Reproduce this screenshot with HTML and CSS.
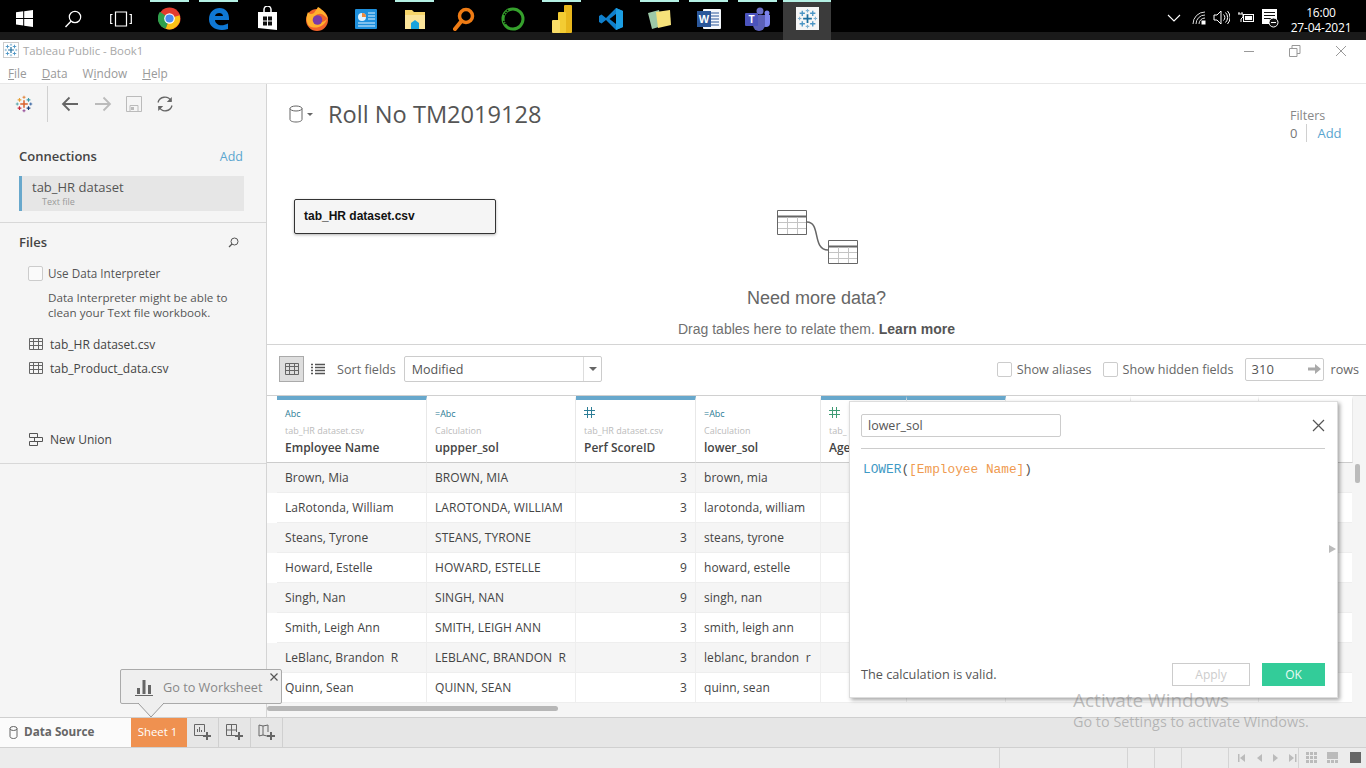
FILE: index.html
```html
<!DOCTYPE html>
<html lang="en">
<head>
<meta charset="utf-8">
<title>Tableau Public - Book1</title>
<link rel="stylesheet" href="styles.css">
</head>
<body>
<svg class="defs" width="0" height="0">
  <symbol id="tb-grid" viewBox="0 0 14 12"><path d="M.5.5h13v11H.5zM.5 3.5h13M.5 7.5h13M4.5.5v11M9.5.5v11" fill="none" stroke="currentColor"/></symbol>
  <symbol id="hash" viewBox="0 0 11 11"><path d="M3.500 0v11M7.500 0v11M0 3.500h11M0 7.500h11" fill="none" stroke="currentColor"/></symbol>
  <symbol id="logo" viewBox="0 0 24 24"><g fill="none" stroke-width="1.5"><path d="M12 7v10M7 12h10" stroke="#1f6f9f" stroke-width="2"/><path d="M6 3v6M3 6h6M18 3v6M15 6h6M6 15v6M3 18h6M18 15v6M15 18h6" stroke="#4a94c4"/><path d="M12 1v4M10 3h4M12 19v4M10 21h4M1 12h4M3 10v4M19 12h4M21 10v4" stroke="#7fb2d3" stroke-width="1.2"/></g></symbol>
</svg>

<header class="taskbar">
  <div class="tb-left">
    <span class="tb-item"><svg width="17" height="17" viewBox="0 0 17 17"><path d="M0 2.3 7.2 1.3v6.6H0zM8.2 1.2 17 0v7.9H8.2zM0 8.9h7.2v6.7L0 14.6zM8.2 8.9H17V17l-8.8-1.2z" fill="#fff"/></svg></span>
    <span class="tb-item"><svg width="18" height="18" viewBox="0 0 18 18"><circle cx="11" cy="7" r="5.7" fill="none" stroke="#fff" stroke-width="1.2"/><path d="M7 11.2 1.5 17" stroke="#fff" stroke-width="1.4"/></svg></span>
    <span class="tb-item"><svg width="22" height="16" viewBox="0 0 22 16"><path d="M5.5 1h11v14h-11zM2.5 3.5H.7v9h1.8M19.500 3.500h1.800v9h-1.800" fill="none" stroke="#fff" stroke-width="1.200"/></svg></span>
    <span class="tb-item tb-on"><svg width="23" height="23" viewBox="0 0 24 24"><circle cx="12" cy="12" r="11.500" fill="#e33b2e"/><path d="M12 12 22.500 8.500A11.500 11.500 0 0 1 8 22.800z" fill="#fbc116"/><path d="M12 12 8 22.800A11.500 11.500 0 0 1 2 5z" fill="#2fa04c"/><circle cx="12" cy="12" r="5.500" fill="#fff"/><circle cx="12" cy="12" r="4.300" fill="#4a8bf0"/></svg></span>
    <span class="tb-item tb-on"><svg width="22" height="24" viewBox="0 0 22 24"><path d="M21 13H7c.3 5 6.500 7 13 3.500v5.500C11 25 1 21 1 12.500 1 5 6 1 11.500 1 18 1 21.500 6 21 13zM7 9h8c0-4-7.500-4-8 0z" fill="#0f78d4"/></svg></span>
    <span class="tb-item"><svg width="21" height="25" viewBox="0 0 21 25"><path d="M1 6h19v18L1 22z" fill="#fff"/><path d="M7 6V3.500a3.500 3.500 0 0 1 7 0V6" fill="none" stroke="#fff" stroke-width="1.500"/><path d="M6 10.500h4v4H6zM11 10.500h4v4h-4zM6 15.500h4v4H6zM11 15.500h4v4h-4z" fill="#111"/></svg></span>
    <span class="tb-item"><svg width="24" height="24" viewBox="0 0 24 24"><circle cx="12" cy="13" r="11" fill="#f0632b"/><path d="M3 5c2 3 4 2 6 1 2-3 3-4 4-6 2 1 8 5 10 12-2-2-6-6-9-5-5 0-5 6 0 8 3 1 6-1 8-3-2 7-11 11-18 7C1 15 1 10 3 5z" fill="#ffb02e"/><circle cx="12.500" cy="13" r="4.800" fill="#7a3aa8"/></svg></span>
    <span class="tb-item"><svg width="22" height="20" viewBox="0 0 22 20"><rect width="22" height="20" rx="1" fill="#1e8fdc"/><circle cx="7" cy="8" r="4" fill="#dff2ff"/><path d="M7 8V4a4 4 0 0 1 4 4z" fill="#f08a3c"/><path d="M13 4h7M13 7h7M13 10h7M3 14h17M3 17h17" stroke="#dff2ff"/></svg></span>
    <span class="tb-item tb-on"><svg width="22" height="22" viewBox="0 0 22 22"><path d="M1 2h7l2 2h11v16H1z" fill="#f6d56b"/><path d="M1 7h20v14H1z" fill="#fbe49a"/><path d="M7 21v-6l4-3 4 3v6z" fill="#18a3dd"/></svg></span>
    <span class="tb-item"><svg width="22" height="24" viewBox="0 0 22 24"><circle cx="13" cy="9" r="6.500" fill="none" stroke="#ee7b14" stroke-width="3.500"/><path d="M8.500 14 2 22" stroke="#ee7b14" stroke-width="4" stroke-linecap="round"/></svg></span>
    <span class="tb-item"><svg width="24" height="24" viewBox="0 0 24 24"><circle cx="12" cy="12" r="10" fill="none" stroke="#35a02c" stroke-width="3"/><path d="M3 8 7 3M2.500 14l2 3" stroke="#000" stroke-width="1.500" stroke-dasharray="1.500 1"/></svg></span>
    <span class="tb-item tb-on"><svg width="20" height="28" viewBox="0 0 20 28"><rect x="12" y="0" width="8" height="28" rx="1" fill="#e8b71c"/><rect x="6" y="7" width="8" height="21" rx="1" fill="#f3cc33"/><rect x="0" y="15" width="8" height="13" rx="1" fill="#f9dd67"/></svg></span>
    <span class="tb-item"><svg width="24" height="24" viewBox="0 0 24 24"><path d="M17 1 7 11 2.500 7.500 0 9v6l2.500 1.500L7 13l10 10 7-3V4z" fill="#0f7fcb"/><path d="M17 7 10.500 12 17 17z" fill="#000"/><path d="M17 1 24 4v16l-7 3z" fill="#1b9de2"/></svg></span>
    <span class="tb-item tb-on"><svg width="25" height="24" viewBox="0 0 25 24"><path d="M1 6 12 3l3 16-10 3z" fill="#9cc9a8"/><path d="M9 5 23 3l1 15-13 3z" fill="#f6e27a"/></svg></span>
    <span class="tb-item tb-on"><svg width="24" height="22" viewBox="0 0 24 22"><rect x="6" y="1" width="18" height="20" rx="1" fill="#f4f7fb"/><path d="M14 5h8M14 8h8M14 11h8M14 14h8M14 17h8" stroke="#2b579a"/><rect x="0" y="3" width="14" height="16" fill="#2b579a"/><text x="7" y="15" class="svg-w">W</text></svg></span>
    <span class="tb-item tb-on"><svg width="26" height="24" viewBox="0 0 26 24"><circle cx="15" cy="4" r="3.500" fill="#6a70c9"/><circle cx="22" cy="6" r="2.500" fill="#7b83eb"/><path d="M17 8h8v8a4 4 0 0 1-8 0z" fill="#7b83eb"/><path d="M8 8h12v10a6 6 0 0 1-12 0z" fill="#5b60b8"/><rect y="6" width="13" height="13" rx="1" fill="#4b53bc"/><text x="6.500" y="16" class="svg-t">T</text></svg></span>
    <span class="tb-item tb-active"><span class="tile"><svg width="21" height="21"><use href="#logo"/></svg></span></span>
  </div>
  <div class="tray">
    <svg width="14" height="8" viewBox="0 0 14 8"><path d="M1 1l6 6 6-6" fill="none" stroke="#fff" stroke-width="1.100"/></svg>
    <svg class="t-wifi" width="14" height="14" viewBox="0 0 14 14"><path d="M1 13A12 12 0 0 1 13 1M4 13a9 9 0 0 1 9-9M7 13a6 6 0 0 1 6-6" fill="none" stroke="#ddd"/><rect x="9.500" y="9.500" width="4" height="4" fill="#fff"/></svg>
    <svg class="t-vol" width="17" height="15" viewBox="0 0 17 15"><path d="M1 5h3l4-4v13l-4-4H1z" fill="none" stroke="#fff"/><path d="M10.500 4.500a4 4 0 0 1 0 6M12.500 2.500a7 7 0 0 1 0 10M14.500 1a9.500 9.500 0 0 1 0 13" fill="none" stroke="#fff"/></svg>
    <svg class="t-bat" width="16" height="12" viewBox="0 0 16 12"><path d="M1 0v2M4 0v2M0 2h5v3L3 7v3" fill="none" stroke="#fff"/><rect x="5.500" y="2.500" width="10" height="7" fill="#111" stroke="#fff"/><rect x="7" y="4" width="7" height="4" fill="#fff"/></svg>
    <svg class="t-note" width="17" height="20" viewBox="0 0 17 20"><path d="M0 1h15v12H9v3H0z" fill="#fff"/><path d="M2 4.500h11M2 7.500h11M2 10.500h7" stroke="#111"/><circle cx="11.500" cy="14.500" r="4.500" fill="#111" stroke="#fff"/><path d="M9 14.500h5" stroke="#fff"/></svg>
    <div class="clock"><span>16:00</span><span>27-04-2021</span></div>
  </div>
</header>

<div class="titlebar">
  <div class="tt-left">
    <svg class="app-icon" width="16" height="16"><use href="#logo"/></svg>
    <span>Tableau Public - Book1</span>
  </div>
  <div class="win-ctrls">
    <svg width="12" height="12" viewBox="0 0 12 12"><path d="M1 6.500h10" stroke="#999"/></svg>
    <svg width="12" height="12" viewBox="0 0 12 12"><path d="M.5 3.500h7.500v8H.5zM3 3.500V.5h8v8H8" fill="none" stroke="#999"/></svg>
    <svg width="12" height="12" viewBox="0 0 12 12"><path d="M1 1l10 10M11 1 1 11" stroke="#999"/></svg>
  </div>
</div>
<nav class="menubar"><span><u>F</u>ile</span><span><u>D</u>ata</span><span>W<u>i</u>ndow</span><span><u>H</u>elp</span></nav>

<div class="work">
  <aside class="side">
    <div class="side-tools">
      <svg width="18" height="18" viewBox="0 0 24 24"><g fill="none"><path d="M12 7v10M7 12h10" stroke="#d9622b" stroke-width="2"/><path d="M6 4v5M3.500 6.500h5" stroke="#e8a33a" stroke-width="1.500"/><path d="M18 4v5M15.500 6.500h5" stroke="#3f9aa8" stroke-width="1.500"/><path d="M6 15v5M3.500 17.500h5" stroke="#c72a3c" stroke-width="1.500"/><path d="M18 15v5M15.500 17.500h5" stroke="#1b3f78" stroke-width="1.500"/><path d="M12 1v4M10 3h4" stroke="#e07a2a" stroke-width="1.200"/><path d="M12 19v4M10 21h4" stroke="#8c3d8f" stroke-width="1.200"/><path d="M1 12h4M3 10v4" stroke="#4fa3a8" stroke-width="1.200"/><path d="M19 12h4M21 10v4" stroke="#2d5f9e" stroke-width="1.200"/></g></svg>
      <span class="st-div"></span>
      <svg width="18" height="16" viewBox="0 0 18 16"><path d="M17 8H2M8.500 1.500 2 8l6.500 6.500" fill="none" stroke="#666" stroke-width="1.800"/></svg>
      <svg width="18" height="16" viewBox="0 0 18 16"><path d="M1 8h15M9.500 1.500 16 8l-6.500 6.500" fill="none" stroke="#bbb" stroke-width="1.800"/></svg>
      <svg width="16" height="16" viewBox="0 0 16 16"><path d="M.5.5h15v15H.5z" fill="none" stroke="#bbb"/><path d="M4 9.500h8v6H4z" fill="none" stroke="#bbb"/><rect x="5" y="11" width="3" height="3" fill="#bbb"/></svg>
      <svg width="18" height="18" viewBox="0 0 18 18"><path d="M2 7.500A7 7 0 0 1 15 6M16 10.500A7 7 0 0 1 3 12" fill="none" stroke="#666" stroke-width="1.300"/><path d="M15.800 2v5h-5zM2.200 16v-5h5z" fill="#666"/></svg>
    </div>
    <section class="conn">
      <div class="sec-head"><strong>Connections</strong><a class="link">Add</a></div>
      <div class="conn-box"><span>tab_HR dataset</span><small>Text file</small></div>
    </section>
    <section class="files">
      <div class="sec-head"><strong>Files</strong><svg width="11" height="11" viewBox="0 0 11 11"><circle cx="6.500" cy="4.500" r="3.500" fill="none" stroke="#555"/><path d="M4 7 1 10" stroke="#555" stroke-width="1.300"/></svg></div>
      <label class="interp"><span class="check"></span>Use Data Interpreter</label>
      <p class="interp-note">Data Interpreter might be able to clean your Text file workbook.</p>
      <div class="file"><svg width="14" height="12"><use href="#tb-grid"/></svg>tab_HR dataset.csv</div>
      <div class="file"><svg width="14" height="12"><use href="#tb-grid"/></svg>tab_Product_data.csv</div>
      <div class="file union"><svg width="14" height="13" viewBox="0 0 14 13"><path d="M.5.500h8v4h-8zM5.500 4.500h8v4h-8zM.5 8.500h8v4h-8z" fill="none" stroke="#555"/></svg>New Union</div>
    </section>
  </aside>

  <main class="main">
    <section class="canvas">
      <div class="canvas-head">
        <div class="ch-title">
          <svg width="14" height="18" viewBox="0 0 14 18"><ellipse cx="7" cy="3.500" rx="6" ry="2.500" fill="none" stroke="#666"/><path d="M1 3.500v11C1 16 3.500 17 7 17s6-1 6-2.500v-11" fill="none" stroke="#666"/></svg>
          <span class="caret"></span>
          <h1>Roll No TM2019128</h1>
        </div>
        <div class="filters">
          <span class="f-label">Filters</span>
          <div class="f-row"><span>0</span><a class="link">Add</a></div>
        </div>
      </div>
      <div class="canvas-body">
        <div class="node">tab_HR dataset.csv</div>
        <div class="hint">
          <svg class="hint-ic" width="82" height="54" viewBox="0 0 82 54"><g fill="#fff" stroke="#666"><path d="M.5.500h29v24H.500zM51.500 30.500h29v23h-29z"/></g><path d="M.5 6.500h29M51.500 36.500h29" stroke="#666" stroke-width="2"/><path d="M1 12.500h28M1 18.500h28M10.500 7v17M20.500 7v17M52 42.500h28M52 48.500h28M61.500 37v16M71.500 37v16" stroke="#c4c4c4"/><path d="M30 12c14 0 5 28 21 28" fill="none" stroke="#666" stroke-width="1.500"/></svg>
          <h2>Need more data?</h2>
          <p>Drag tables here to relate them. <b>Learn more</b></p>
        </div>
      </div>
    </section>

    <section class="toolbar">
      <div class="tl-left">
        <span class="view-btn"><svg width="14" height="12"><use href="#tb-grid"/></svg></span>
        <svg class="list-ic" width="14" height="12" viewBox="0 0 14 12"><path d="M0 1.500h2M4 1.500h10M0 4.500h2M4 4.500h10M0 7.500h2M4 7.500h10M0 10.500h2M4 10.500h10" stroke="#555" stroke-width="1.600"/></svg>
        <span class="lbl">Sort fields</span>
        <div class="select"><span>Modified</span><i></i></div>
      </div>
      <div class="tl-right">
        <label class="opt"><span class="check"></span>Show aliases</label>
        <label class="opt"><span class="check"></span>Show hidden fields</label>
        <div class="rows-input"><span>310</span><svg width="13" height="10" viewBox="0 0 13 10"><path d="M0 3.500h7V0l6 5-6 5V6.500H0z" fill="#aaa"/></svg></div>
        <span class="lbl">rows</span>
      </div>
    </section>

    <section class="grid-wrap">
      <div class="dgrid">
        <div class="gutter hd"></div>
        <div class="hcell blue"><span class="ty">Abc</span><span class="src">tab_HR dataset.csv</span><b>Employee Name</b></div>
        <div class="hcell"><span class="ty">=Abc</span><span class="src">Calculation</span><b>uppper_sol</b></div>
        <div class="hcell blue"><span class="ty"><svg width="11" height="11"><use href="#hash"/></svg></span><span class="src">tab_HR dataset.csv</span><b>Perf ScoreID</b></div>
        <div class="hcell"><span class="ty">=Abc</span><span class="src">Calculation</span><b>lower_sol</b></div>
        <div class="hcell blue"><span class="ty green"><svg width="11" height="11"><use href="#hash"/></svg></span><span class="src">tab_</span><b>Age</b></div>
        <div class="hcell blue"></div>
        <div class="hcell"></div>
        <div class="hcell"></div>
        <div class="hcell"></div>

        <div class="gutter alt"></div><div class="c alt">Brown, Mia</div><div class="c alt">BROWN, MIA</div><div class="c alt n">3</div><div class="c alt">brown, mia</div><div class="c alt"></div><div class="c alt"></div><div class="c alt"></div><div class="c alt"></div><div class="c alt"></div>
        <div class="gutter"></div><div class="c">LaRotonda, William</div><div class="c">LAROTONDA, WILLIAM</div><div class="c n">3</div><div class="c">larotonda, william</div><div class="c"></div><div class="c"></div><div class="c"></div><div class="c"></div><div class="c"></div>
        <div class="gutter alt"></div><div class="c alt">Steans, Tyrone</div><div class="c alt">STEANS, TYRONE</div><div class="c alt n">3</div><div class="c alt">steans, tyrone</div><div class="c alt"></div><div class="c alt"></div><div class="c alt"></div><div class="c alt"></div><div class="c alt"></div>
        <div class="gutter"></div><div class="c">Howard, Estelle</div><div class="c">HOWARD, ESTELLE</div><div class="c n">9</div><div class="c">howard, estelle</div><div class="c"></div><div class="c"></div><div class="c"></div><div class="c"></div><div class="c"></div>
        <div class="gutter alt"></div><div class="c alt">Singh, Nan</div><div class="c alt">SINGH, NAN</div><div class="c alt n">9</div><div class="c alt">singh, nan</div><div class="c alt"></div><div class="c alt"></div><div class="c alt"></div><div class="c alt"></div><div class="c alt"></div>
        <div class="gutter"></div><div class="c">Smith, Leigh Ann</div><div class="c">SMITH, LEIGH ANN</div><div class="c n">3</div><div class="c">smith, leigh ann</div><div class="c"></div><div class="c"></div><div class="c"></div><div class="c"></div><div class="c"></div>
        <div class="gutter alt"></div><div class="c alt">LeBlanc, Brandon  R</div><div class="c alt">LEBLANC, BRANDON  R</div><div class="c alt n">3</div><div class="c alt">leblanc, brandon  r</div><div class="c alt"></div><div class="c alt"></div><div class="c alt"></div><div class="c alt"></div><div class="c alt"></div>
        <div class="gutter"></div><div class="c">Quinn, Sean</div><div class="c">QUINN, SEAN</div><div class="c n">3</div><div class="c">quinn, sean</div><div class="c"></div><div class="c"></div><div class="c"></div><div class="c"></div><div class="c"></div>
      </div>
      <div class="vscroll"><span></span></div>
      <div class="hscroll"></div>
    </section>
  </main>
</div>

<div class="tabbar">
  <div class="tab-ds"><svg width="9" height="13" viewBox="0 0 9 13"><ellipse cx="4.500" cy="2.500" rx="3.500" ry="2" fill="none" stroke="#666"/><path d="M1 2.500v8c0 1 1.500 2 3.500 2s3.500-1 3.500-2v-8" fill="none" stroke="#666"/></svg><b>Data Source</b></div>
  <div class="tab-sheet">Sheet 1</div>
  <div class="tab-add"><svg width="18" height="17" viewBox="0 0 18 17"><path d="M9 11.500H.5V.5h10V8" fill="none" stroke="#666"/><path d="M3.500 8V5M5.500 8V3M7.500 8V6" stroke="#666"/><path d="M13 8v8M9 12h8" stroke="#666" stroke-width="2"/></svg></div>
  <div class="tab-add"><svg width="18" height="17" viewBox="0 0 18 17"><path d="M9 11.500H.5V.5h10V8M.5 6h10M5.500.5v11" fill="none" stroke="#666"/><path d="M13 8v8M9 12h8" stroke="#666" stroke-width="2"/></svg></div>
  <div class="tab-add"><svg width="18" height="17" viewBox="0 0 18 17"><path d="M9 12 5 11 1 12V1l4 1 5-1v7M5 2v9" fill="none" stroke="#666"/><path d="M13 8v8M9 12h8" stroke="#666" stroke-width="2"/></svg></div>
</div>
<footer class="statusbar">
  <span class="sb sb1"></span><span class="sb sb2"></span><span class="sb sb3"></span><span class="sb sb4"></span>
  <span class="sb sb5"><svg width="62" height="10" viewBox="0 0 62 10"><g fill="#bbb"><path d="M0 1h1.500v8H0zM7 1v8L2 5zM24 1v8l-5-4zM35 1v8l5-4zM51 1v8l5-4zM57 1h1.500v8H57z"/></g></svg></span>
  <span class="sb sb6"><svg width="56" height="12" viewBox="0 0 56 12"><g fill="#bbb"><rect width="3" height="3"/><rect x="4" width="3" height="3"/><rect x="8" width="3" height="3"/><rect y="4" width="3" height="3"/><rect x="4" y="4" width="3" height="3"/><rect x="8" y="4" width="3" height="3"/><rect y="8" width="3" height="3"/><rect x="4" y="8" width="3" height="3"/><rect x="8" y="8" width="3" height="3"/><rect x="21" width="11" height="7"/><rect x="21" y="8" width="3" height="3"/><rect x="25" y="8" width="3" height="3"/><rect x="29" y="8" width="3" height="3"/></g><rect x="44" width="11" height="11" fill="#666"/></svg></span>
</footer>

<div class="tooltip">
  <svg width="18" height="17" viewBox="0 0 18 17"><path d="M2 15V9h3v6zM7.500 15V1h3v14zM13 15V6h3v9z" fill="#666"/><path d="M0 16.500h18" stroke="#666"/></svg>
  <span>Go to Worksheet</span>
  <svg class="tip-x" width="8" height="8" viewBox="0 0 8 8"><path d="M.5.500l7 7M7.500.500l-7 7" stroke="#555" stroke-width="1.200"/></svg>
  <svg class="tip-arrow" width="26" height="15" viewBox="0 0 26 15"><path d="M0 0 13 14 26 0" fill="#efefef" stroke="#999"/></svg>
</div>

<div class="dialog">
  <div class="dl-head">
    <div class="dl-name">lower_sol</div>
    <svg width="13" height="13" viewBox="0 0 13 13"><path d="M1 1l11 11M12 1 1 12" stroke="#555" stroke-width="1.200"/></svg>
  </div>
  <div class="dl-code"><span class="k">LOWER</span>(<span class="f">[Employee Name]</span>)</div>
  <span class="dl-more"></span>
  <div class="dl-foot">
    <span class="dl-valid">The calculation is valid.</span>
    <div class="dl-btns"><button class="b-apply">Apply</button><button class="b-ok">OK</button></div>
  </div>
</div>

<div class="watermark"><span>Activate Windows</span><small>Go to Settings to activate Windows.</small></div>
</body>
</html>
```

FILE: styles.css
```css
* { box-sizing: border-box; }
html, body { margin: 0; padding: 0; }
body {
  width: 1366px; height: 768px; overflow: hidden; position: relative;
  display: flex; flex-direction: column; background: #fff; color: #555;
  font: 12.500px "Open Sans", "Noto Sans", sans-serif;
}
.defs { position: absolute; }
h1, h2, p { margin: 0; font-weight: normal; }
svg { display: block; flex: none; }
.link { color: #5aa5cf; }

/* Windows taskbar */
.taskbar {
  height: 40px; flex: none; display: flex; justify-content: space-between;
  background: linear-gradient(#000 32px, #1a1a1a 32px);
  color: #fff;
}
.tb-left { display: flex; }
.tb-item {
  width: 49px; height: 40px; display: flex; align-items: center; justify-content: center;
  padding-bottom: 3px; position: relative;
}
.tb-item:nth-child(2), .tb-item:nth-child(3) { width: 48px; }
.tb-on::before {
  content: ""; position: absolute; top: 0; left: 5px; right: 5px; height: 2px; background: #b4f0e4;
}
.tb-active { background: #3b3b3b; margin-left: 1px; width: 48px; }
.tb-active::before { content: ""; position: absolute; top: 0; left: 0; right: 0; height: 2px; background: #b4f0e4; }
.tile { width: 23px; height: 23px; background: #f6f6f6; display: flex; align-items: center; justify-content: center; }
.svg-w { fill: #fff; font: bold 11px "Liberation Sans", sans-serif; text-anchor: middle; }
.svg-t { fill: #fff; font: bold 10px "Liberation Sans", sans-serif; text-anchor: middle; }
.tray { display: flex; align-items: center; padding-right: 9px; padding-bottom: 5px; }
.t-wifi { margin-left: 11px; }
.t-vol { margin-left: 7px; }
.t-bat { margin-left: 8px; }
.t-note { margin-left: 8px; }
.clock {
  width: 72px; margin-left: 6px; margin-top: 5px; display: flex; flex-direction: column; align-items: center;
  font: 12px/15px "Open Sans", sans-serif; letter-spacing: -.2px; white-space: nowrap;
}

/* Title and menu */
.titlebar { height: 22px; flex: none; display: flex; justify-content: space-between; align-items: center; }
.tt-left { display: flex; align-items: center; gap: 4px; padding-left: 3px; color: #a8a8a8; font-size: 11.400px; margin-top: -2px; }
.app-icon { border: 1px solid #ccc; background: #fff; }
.win-ctrls { display: flex; gap: 34px; padding-right: 19px; margin-top: -1px; }
.menubar {
  height: 22px; flex: none; display: flex; gap: 15px; padding: 3px 0 0 8px; color: #999; font-size: 11.800px;
  border-bottom: 1px solid #e8e8e8;
}

/* Layout */
.work { flex: 1; min-height: 0; display: flex; }
.side { width: 267px; flex: none; background: #f5f5f5; border-right: 1px solid #d4d4d4; }
.main { flex: 1; min-width: 0; display: flex; flex-direction: column; }

/* Sidebar */
.side-tools { height: 40px; display: flex; align-items: center; padding-left: 15px; }
.side-tools svg:nth-of-type(2) { margin-left: 13px; }
.side-tools svg:nth-of-type(3) { margin-left: 15px; }
.side-tools svg:nth-of-type(4) { margin-left: 14px; }
.side-tools svg:nth-of-type(5) { margin-left: 14px; }
.st-div { width: 1px; height: 36px; background: #d0d0d0; margin-left: 14px; margin-right: 0; }
.sec-head { display: flex; justify-content: space-between; align-items: center; }
.sec-head strong { color: #444; font-size: 13px; font-weight: 600; }
.conn { padding: 23px 23px 12px 19px; height: 99px; border-bottom: 1px solid #d8d8d8; }
.conn-box {
  margin-top: 11px; height: 35px; width: 225px; margin-right: -1px; background: #e6e6e6;
  border-left: 3px solid #68a8cc; padding: 3px 0 0 10px; display: flex; flex-direction: column;
}
.conn-box span { font-size: 13px; line-height: 17px; color: #555; }
.conn-box small { font-size: 9px; line-height: 11px; color: #999; padding-left: 10px; }
.files { padding: 10px 27px 0 19px; height: 241px; border-bottom: 1px solid #d8d8d8; }
.interp { display: flex; align-items: center; gap: 5px; margin: 14px 0 0 9px; color: #555; font-size: 11.700px; }
.check { width: 15px; height: 15px; border: 1px solid #ccc; border-radius: 2px; background: #fafafa; flex: none; }
.interp-note { margin: 9px 0 0 29px; line-height: 15px; font-size: 11.650px; color: #555; }
.file { display: flex; align-items: center; gap: 7px; margin: 8px 0 0 10px; height: 16px; font-size: 12px; color: #444; }
.file svg { color: #666; }
.interp-note + .file { margin-top: 16px; }
.union { margin-top: 55px; }

/* Canvas */
.canvas { height: 261px; flex: none; border-bottom: 1px solid #d4d4d4; }
.canvas-head { height: 60px; display: flex; justify-content: space-between; padding: 18px 23px 0 22px; }
.ch-title { display: flex; align-items: center; height: 24px; }
.caret { width: 0; height: 0; border: 3px solid transparent; border-top: 3px solid #666; border-bottom: 0; margin: 0 15px 0 4px; }
h1 { font-size: 23.600px; line-height: 24px; color: #555; }
.filters { display: flex; flex-direction: column; color: #777; width: 53px; margin-top: 5px; }
.f-label { font-size: 12.500px; line-height: 17px; color: #888; }
.f-row { display: flex; align-items: center; gap: 9px; font-size: 13px; line-height: 18px; }
.f-row .link { border-left: 1px solid #d0d0d0; padding-left: 10px; }
.canvas-body { display: grid; height: 200px; }
.node {
  grid-area: 1 / 1; justify-self: start; align-self: start; margin: 55px 0 0 27px; width: 202px; height: 35px;
  background: #f5f5f5; border: 1px solid #333; border-radius: 2px; box-shadow: 0 1px 3px rgba(0,0,0,.3);
  font: bold 12px/32px "Liberation Sans", sans-serif; color: #111; padding-left: 9px;
}
.hint {
  grid-area: 1 / 1; justify-self: center; display: flex; flex-direction: column; align-items: center;
  padding-top: 66px; font-family: "Liberation Sans", sans-serif; color: #666;
}
.hint-ic { margin-left: 2px; }
.hint h2 { font-size: 18px; line-height: 22px; margin-top: 23px; }
.hint p { font-size: 14px; line-height: 18px; margin-top: 11px; color: #707070; }
.hint b { color: #555; }

/* Toolbar */
.toolbar {
  height: 51px; flex: none; border-bottom: 1px solid #d0d0d0; display: flex; justify-content: space-between;
  align-items: center; padding: 0 7px 2px 12px; font-size: 12.600px;
}
.tl-left, .tl-right { display: flex; align-items: center; }
.view-btn {
  width: 25px; height: 26px; background: #dedede; border: 1px solid #aaa; color: #666;
  display: flex; align-items: center; justify-content: center;
}
.list-ic { margin-left: 7px; color: #555; }
.lbl { color: #666; margin-left: 12px; }
.select {
  width: 198px; height: 26px; margin-left: 8px; border: 1px solid #ccc; border-radius: 2px; background: #fff;
  display: flex; align-items: center; justify-content: space-between; padding-left: 7px; color: #555; font-size: 12.500px;
}
.select i {
  width: 18px; height: 24px; border-left: 1px solid #ddd; position: relative; flex: none;
}
.select i::after {
  content: ""; position: absolute; left: 5px; top: 10px; border: 4px solid transparent; border-top: 4px solid #666; border-bottom: 0;
}
.opt { display: flex; align-items: center; gap: 5px; color: #666; margin-right: 11px; }
.rows-input {
  width: 79px; height: 23px; border: 1px solid #ccc; border-radius: 2px; display: flex; align-items: center;
  justify-content: space-between; padding: 0 2px 0 6px; color: #555; font-size: 13px;
}
.rows-input + .lbl { margin-left: 7px; }
.tl-right .check { background: #fff; }

/* Data grid */
.grid-wrap { flex: 1; min-height: 0; position: relative; background: #f5f5f5; }
.dgrid {
  display: grid; width: 1086px;
  grid-template-columns: 10px 150px 149px 120px 125px 86px 99px 125px 128px 94px;
  grid-template-rows: 67px repeat(8, 30px);
}
.gutter { background: #fff; }
.gutter.hd { border-bottom: 1px solid #ccc; }
.hcell {
  background: #fff; border-right: 1px solid #e8e8e8; border-bottom: 1px solid #ccc; border-top: 4px solid #fff;
  padding: 7px 8px 0; display: flex; flex-direction: column; overflow: hidden; white-space: nowrap;
}
.hcell.blue { border-top-color: #68a8cc; }
.ty { height: 13px; font: 9px/13px "Open Sans", sans-serif; color: #2d7d96; }
.green { color: #3f9b74; }
.src { font-size: 9px; line-height: 12px; margin-top: 5px; color: #bbb; }
.hcell b { font-size: 12px; line-height: 16px; margin-top: 3px; color: #444; font-weight: 600; }
.c {
  background: #fff; border-right: 1px solid #eee; border-bottom: 1px solid #eee; padding: 0 8px; font-size: 12px; line-height: 29px;
  color: #444; white-space: pre; overflow: hidden; letter-spacing: .06px;
}
.alt { background: #f5f5f5; }
.n { text-align: right; }
.vscroll { position: absolute; top: 67px; right: 0; width: 14px; height: 254px; background: #f5f5f5; }
.vscroll span { position: absolute; left: 3px; top: 1px; width: 5px; height: 19px; background: #bbb; border-radius: 2px; }
.hscroll { margin-top: 3px; width: 291px; height: 5px; background: #b7b7b7; border-radius: 3px; }

/* Tabs and status */
.tabbar { height: 31px; flex: none; display: flex; background: #e6e6e6; border-top: 1px solid #cfcfcf; border-bottom: 1px solid #d0d0d0; }
.tab-ds { width: 131px; background: #fbfbfb; display: flex; align-items: center; gap: 6px; padding: 0 0 3px 9px; color: #666; font-size: 11.700px; }
.tab-ds b { font-weight: 700; }
.tab-ds svg { margin-top: 2px; }
.tab-sheet { width: 56px; background: #ef9150; color: #fff; text-align: center; line-height: 28px; font-size: 11.400px; padding-right: 3px; }
.tab-add { width: 32px; display: flex; align-items: center; justify-content: center; border-right: 1px solid #d0d0d0; }
.statusbar { height: 20px; flex: none; display: flex; background: #ececec; }
.sb { height: 20px; border-left: 1px solid #d4d4d4; display: flex; align-items: center; }
.sb1 { margin-left: 999px; width: 128px; }
.sb2 { width: 27px; }
.sb3 { width: 27px; }
.sb4 { width: 47px; }
.sb5 { width: 70px; padding-left: 9px; }
.sb6 { width: 68px; padding-left: 7px; }

/* Go to Worksheet callout */
.tooltip {
  position: absolute; left: 120px; top: 669px; width: 162px; height: 35px; background: #efefef;
  border: 1px solid #aaa; border-radius: 2px; display: flex; align-items: center; gap: 10px;
  padding: 1px 0 0 14px; color: #888; font-size: 12.700px;
}
.tip-x { position: absolute; right: 3px; top: 3px; }
.tip-arrow { position: absolute; left: 17px; top: 33px; }

/* Calculation dialog */
.dialog {
  position: absolute; left: 849px; top: 401px; width: 489px; height: 297px; background: #fff;
  border: 1px solid #ddd; box-shadow: 2px 2px 4px rgba(0,0,0,.35); padding: 12px 12px 0 11px;
  display: flex; flex-direction: column;
}
.dl-head { display: flex; align-items: center; justify-content: space-between; padding: 0 0 11px; border-bottom: 1px solid #ccc; }
.dl-name { width: 200px; height: 23px; border: 1px solid #ccc; border-radius: 2px; padding-left: 6px; font-size: 12.500px; line-height: 21px; color: #555; }
.dl-code { margin: 14px 0 0 2px; font: 12.800px/14px "Liberation Mono", monospace; color: #555; }
.k { color: #3f9ac5; }
.f { color: #ef9a4f; }
.dl-more { position: absolute; right: 1px; top: 143px; border: 4px solid transparent; border-left: 7px solid #bbb; border-right: 0; }
.dl-foot { margin-top: auto; margin-bottom: 11px; display: flex; justify-content: space-between; align-items: center; color: #555; font-size: 12.700px; }
.dl-valid { padding-bottom: 2px; }
.dl-btns { display: flex; gap: 12px; }
button { font: inherit; font-size: 12px; height: 23px; padding: 0; border-radius: 0; }
.b-apply { width: 78px; background: #fff; border: 1px solid #ccc; color: #ccc; }
.b-ok { width: 63px; background: #33cc99; border: 0; color: #e8fbf4; }

/* Activation watermark */
.watermark {
  position: absolute; left: 1073px; top: 688px; display: flex; flex-direction: column;
  color: rgba(110,110,110,.42); pointer-events: none;
}
.watermark span { font-size: 19px; line-height: 24px; }
.watermark small { font-size: 14.400px; line-height: 20px; }
```
